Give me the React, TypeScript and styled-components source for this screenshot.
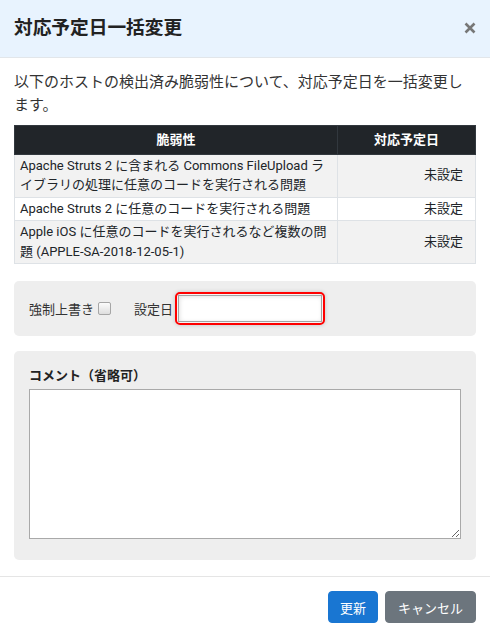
import React from "react";
import styled, { createGlobalStyle } from "styled-components";

const Global = createGlobalStyle`
  html, body { margin: 0; padding: 0; background: #fff; }
  body { font-family: Roboto, "Noto Sans CJK JP", sans-serif; color: #212529; }
  * { box-sizing: border-box; }
`;

const Modal = styled.div`
  width: 490px;
  height: 635px;
  background: #fff;
  display: flex;
  flex-direction: column;
`;

const Header = styled.header`
  height: 58px;
  background: #e8f3fe;
  border-bottom: 1px solid #e2e6ea;
  display: flex;
  align-items: center;
  justify-content: space-between;
  padding: 0 14px 0 14px;
`;

const Title = styled.h1`
  margin: 0;
  font-size: 18.7px;
  font-weight: 700;
  color: #222;
  line-height: 1;
`;

const Close = styled.button`
  border: none;
  background: transparent;
  padding: 0;
  margin: -2px 0 0 0;
  width: 12px;
  height: 12px;
  display: flex;
  align-items: center;
  justify-content: center;
  cursor: pointer;
`;

const Body = styled.div`
  padding: 13px 14px 16px;
`;

const Intro = styled.p`
  margin: 0 0 8px;
  font-size: 15px;
  line-height: 23px;
  color: #333;
`;

const Table = styled.table`
  width: 100%;
  border-collapse: collapse;
  border: 1px solid #c6c8ca;
  font-size: 13px;
  line-height: 19.5px;
`;

const Th = styled.th<{ $w?: string }>`
  background: #212529;
  color: #fff;
  font-weight: 700;
  text-align: center;
  padding: 4px 4px;
  border: 1px solid #32383e;
  width: ${(p) => p.$w || "auto"};
`;

const Tr = styled.tr<{ $striped?: boolean }>`
  background: ${(p) => (p.$striped ? "#f2f2f2" : "#fff")};
`;

const Td = styled.td<{ $right?: boolean }>`
  border: 1px solid #dee2e6;
  padding: 1px ${(p) => (p.$right ? "12px" : "4px")} 2px 5px;
  text-align: ${(p) => (p.$right ? "right" : "left")};
  vertical-align: middle;
  color: #212529;
`;

const Panel = styled.div<{ $mt: number }>`
  margin-top: ${(p) => p.$mt}px;
  background: #eeeeee;
  border-radius: 5px;
`;

const DateRow = styled.div`
  height: 55px;
  padding: 0 15px;
  display: flex;
  align-items: center;
  font-size: 13px;
  color: #333;
`;

const Label = styled.label`
  display: inline-flex;
  align-items: center;
`;

const Check = styled.input`
  appearance: none;
  width: 13px;
  height: 13px;
  margin: 0 0 0 4px;
  border: 1px solid #a6a6a6;
  border-radius: 2px;
  background: linear-gradient(#fcfcfc, #dedede);
`;

const DateLabel = styled.span`
  margin-left: 23px;
  margin-right: 2px;
`;

const RedFrame = styled.span`
  display: inline-flex;
  border: 2px solid #ff0000;
  border-radius: 5px;
  padding: 1px;
  box-shadow: 0 0 4px rgba(0, 0, 0, 0.18);
  background: #f4f4f4;
`;

const DateInput = styled.input`
  width: 144px;
  height: 27px;
  border: 1px solid #a3a3a3;
  background: #fff;
  box-shadow: inset 1px 1px 4px rgba(0, 0, 0, 0.12);
  outline: none;
  padding: 0 4px;
`;

const CommentBox = styled.div`
  padding: 15px 15px 21px;
`;

const CommentLabel = styled.div`
  font-size: 13px;
  font-weight: 700;
  line-height: 20px;
  color: #222;
  margin-bottom: 3px;
`;

const TextArea = styled.textarea`
  display: block;
  width: 432px;
  height: 150px;
  border: 1px solid #a9a9a9;
  background: #fff;
  resize: both;
  outline: none;
`;

const Footer = styled.footer`
  border-top: 1px solid #e5e5e5;
  padding: 14px 14px 0;
  display: flex;
  justify-content: flex-end;
  gap: 7px;
`;

const Button = styled.button<{ $variant: "primary" | "secondary" }>`
  height: 32px;
  padding: 0 11px;
  border: 1px solid ${(p) => (p.$variant === "primary" ? "#1976d2" : "#6c757d")};
  background: ${(p) => (p.$variant === "primary" ? "#1976d2" : "#6c757d")};
  color: #fff;
  font-family: Roboto, "Noto Sans CJK JP", sans-serif;
  font-size: 13px;
  border-radius: 4px;
  cursor: pointer;
`;

const CancelButton = styled(Button)`
  padding: 0 12px;
`;

const rows = [
  {
    name: "Apache Struts 2 に含まれる Commons FileUpload ライブラリの処理に任意のコードを実行される問題",
    date: "未設定",
  },
  { name: "Apache Struts 2 に任意のコードを実行される問題", date: "未設定" },
  {
    name: "Apple iOS に任意のコードを実行されるなど複数の問題 (APPLE-SA-2018-12-05-1)",
    date: "未設定",
  },
];

export default function App() {
  return (
    <>
      <Global />
      <Modal>
        <Header>
          <Title>対応予定日一括変更</Title>
          <Close aria-label="close">
            <svg width="12" height="12" viewBox="0 0 12 12">
              <path d="M1.5 1.5 L10.5 10.5 M10.5 1.5 L1.5 10.5" stroke="#777" strokeWidth="2.6" strokeLinecap="butt" />
            </svg>
          </Close>
        </Header>
        <Body>
          <Intro>以下のホストの検出済み脆弱性について、対応予定日を一括変更します。</Intro>
          <Table>
            <thead>
              <tr>
                <Th>脆弱性</Th>
                <Th $w="138px">対応予定日</Th>
              </tr>
            </thead>
            <tbody>
              {rows.map((r, i) => (
                <Tr key={i} $striped={i % 2 === 0}>
                  <Td>{r.name}</Td>
                  <Td $right>{r.date}</Td>
                </Tr>
              ))}
            </tbody>
          </Table>
          <Panel $mt={17}>
            <DateRow>
              <Label>
                強制上書き
                <Check type="checkbox" />
              </Label>
              <DateLabel>設定日</DateLabel>
              <RedFrame>
                <DateInput type="text" />
              </RedFrame>
            </DateRow>
          </Panel>
          <Panel $mt={15}>
            <CommentBox>
              <CommentLabel>コメント（省略可）</CommentLabel>
              <TextArea />
            </CommentBox>
          </Panel>
        </Body>
        <Footer>
          <Button $variant="primary">更新</Button>
          <CancelButton $variant="secondary">キャンセル</CancelButton>
        </Footer>
      </Modal>
    </>
  );
}
